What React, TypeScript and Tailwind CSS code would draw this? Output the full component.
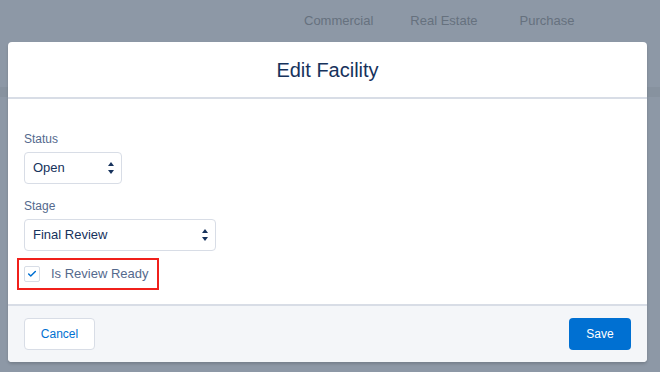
import { Check } from 'lucide-react';

function SelectArrows() {
  return (
    <svg width="6" height="12" viewBox="0 0 6 12" className="shrink-0">
      <path d="M3 0 L6 4 L0 4 Z" fill="#16325c" />
      <path d="M0 8 L6 8 L3 12 Z" fill="#16325c" />
    </svg>
  );
}

function FakeSelect({ value, width }: { value: string; width: string }) {
  return (
    <div className={`${width} h-[32px] flex items-center justify-between pl-2 pr-[7px] bg-white border border-[#d8dde6] rounded-[4px] text-[13px] text-[#16325c]`}>
      <span>{value}</span>
      <SelectArrows />
    </div>
  );
}

export default function App() {
  return (
    <div className="relative w-[660px] h-[372px] overflow-hidden bg-[#8d98a6] font-['Liberation_Sans',Arial,sans-serif]">
      {/* Page behind the overlay */}
      <div className="h-[87px] flex items-start">
        <nav className="flex gap-[37px] pl-[304px] pt-[11px] text-[13px] text-[#66717e]">
          <span>Commercial</span>
          <span>Real Estate</span>
          <span className="pl-[5px]">Purchase</span>
        </nav>
      </div>
      <div className="h-[10px] bg-[#87929f]" />

      {/* Modal */}
      <div className="absolute left-[8px] top-[42px] w-[639px] bg-white rounded-[4px] shadow-[0_2px_3px_rgba(0,0,0,0.16)] overflow-hidden">
        <header className="h-[57px] flex items-center justify-center border-b-2 border-[#d8dde6]">
          <h1 className="text-[20px] text-[#16325c] pt-[1px]">Edit Facility</h1>
        </header>

        <div className="pl-4 pt-[31px] pb-[14px]">
          <label className="block text-[12px] leading-[18px] text-[#54698d] mb-1">Status</label>
          <FakeSelect value="Open" width="w-[98px]" />

          <label className="block text-[12px] leading-[18px] text-[#54698d] mt-[13px] mb-1">Stage</label>
          <FakeSelect value="Final Review" width="w-[192px]" />

          <div className="mt-[7px] ml-[-7px] w-[142px] h-[32px] flex items-center gap-[11px] pl-[5px] border-2 border-[#f0201b]">
            <div className="w-[16px] h-[16px] border border-[#d8dde6] rounded-[2px] bg-white flex items-center justify-center">
              <Check className="w-[10px] h-[10px] text-[#0070d2]" strokeWidth={3.5} />
            </div>
            <span className="text-[13px] text-[#54698d]">Is Review Ready</span>
          </div>
        </div>

        <footer className="bg-[#f4f6f9] border-t-2 border-[#d8dde6] px-4 py-3 flex items-center justify-between">
          <button className="h-[32px] w-[71px] bg-white border border-[#d8dde6] rounded-[4px] text-[12px] text-[#0070d2]">
            Cancel
          </button>
          <button className="h-[32px] w-[62px] bg-[#0070d2] rounded-[4px] text-[12px] text-white">
            Save
          </button>
        </footer>
      </div>
    </div>
  );
}
